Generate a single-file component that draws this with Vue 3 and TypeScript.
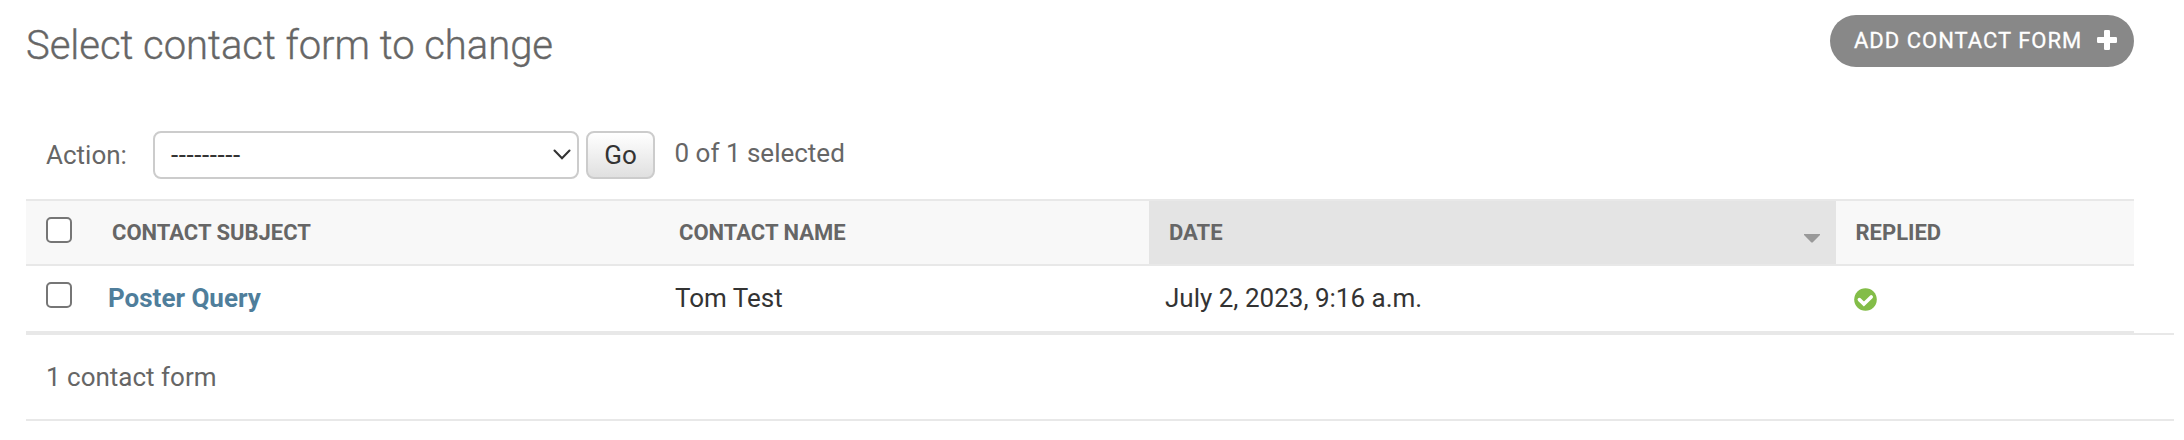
<script setup lang="ts">
import { ref } from 'vue'

interface ContactForm {
  subject: string
  name: string
  date: string
  replied: boolean
}

const rows: ContactForm[] = [
  { subject: 'Poster Query', name: 'Tom Test', date: 'July 2, 2023, 9:16 a.m.', replied: true },
]
const selected = ref<boolean[]>(rows.map(() => false))
</script>

<template>
  <main class="page">
    <header class="top">
      <h1>Select contact form to change</h1>
      <a class="add">
        <span>Add contact form</span>
        <svg class="plus" viewBox="0 0 20 20">
          <rect x="7" y="0" width="6" height="20" rx="1.3" />
          <rect x="0" y="7" width="20" height="6" rx="1.3" />
        </svg>
      </a>
    </header>

    <div class="actions">
      <span class="label">Action:</span>
      <div class="select">
        <span class="value">---------</span>
        <svg class="chevron" viewBox="0 0 18 12">
          <path d="M1.5 1.5 9 9.3 16.5 1.5" />
        </svg>
      </div>
      <button class="go" type="button">Go</button>
      <span class="counter">0 of {{ rows.length }} selected</span>
    </div>

    <div class="table">
      <div class="row head">
        <div class="cell"><input type="checkbox" class="check" /></div>
        <div class="cell">Contact subject</div>
        <div class="cell">Contact name</div>
        <div class="cell sorted">
          <span>Date</span>
          <svg class="arrow" viewBox="0 0 16 9"><path d="M0 0H16V1L8.6 8.6H7.4L0 1Z" /></svg>
        </div>
        <div class="cell">Replied</div>
      </div>
      <div v-for="(row, i) in rows" :key="row.subject" class="row body">
        <div class="cell"><input v-model="selected[i]" type="checkbox" class="check" /></div>
        <div class="cell link">{{ row.subject }}</div>
        <div class="cell">{{ row.name }}</div>
        <div class="cell">{{ row.date }}</div>
        <div class="cell">
          <svg v-if="row.replied" class="yes" viewBox="0 0 23 23">
            <circle cx="11.5" cy="11.5" r="11.3" />
            <path d="M5.4 11.6 9.9 16 17.2 9" />
          </svg>
        </div>
      </div>
    </div>
    <p class="paginator">{{ rows.length }} contact form</p>
  </main>
</template>

<style>
body {
  margin: 0;
  background: #fff;
}
</style>

<style scoped>
.page {
  box-sizing: border-box;
  height: 440px;
  padding: 15px 10px 0 26px;
  font-family: Roboto, "Liberation Sans", sans-serif;
  font-size: 26px;
  color: #666;
}
.top {
  display: flex;
  justify-content: space-between;
  height: 116px;
  margin-right: 40px;
}
h1 {
  margin: 7px 0 0;
  font-size: 40px;
  line-height: 48px;
  font-weight: 300;
  letter-spacing: -0.03px;
  -webkit-text-stroke: 0.35px #666;
}
.add {
  box-sizing: border-box;
  display: flex;
  align-items: center;
  justify-content: space-between;
  width: 304px;
  height: 52px;
  padding: 0 17px 2px 24px;
  border-radius: 26px;
  background: #888;
  color: #fff;
  font-size: 22px;
  letter-spacing: 1px;
  text-transform: uppercase;
  white-space: nowrap;
  -webkit-text-stroke: 0.3px #fff;
}
.plus {
  width: 20px;
  height: 20px;
  fill: #fff;
}
.actions {
  display: flex;
  height: 68px;
  line-height: 48px;
}
.label {
  width: 107px;
  padding-left: 20px;
}
.select {
  box-sizing: border-box;
  display: flex;
  align-items: center;
  justify-content: space-between;
  width: 426px;
  height: 48px;
  padding: 0 6px 0 16px;
  border: 2px solid #ccc;
  border-radius: 8px;
  color: #333;
}
.value {
  letter-spacing: 0.55px;
}
.chevron {
  width: 18px;
  height: 12px;
  fill: none;
  stroke: #333;
  stroke-width: 2.1;
  stroke-linecap: round;
}
.go {
  box-sizing: border-box;
  width: 69px;
  height: 48px;
  margin: 0 0 0 7px;
  padding: 0 0 1px;
  border: 2px solid #ccc;
  border-radius: 8px;
  background: linear-gradient(#fff, #e0e0e0);
  color: #333;
  font: inherit;
  line-height: 30px;
}
.counter {
  margin-left: 19.5px;
  line-height: 45px;
}
.table {
  width: 2108px;
}
.row {
  display: grid;
  grid-template-columns: 66px 567px 490px 687px 298px;
  border-bottom: 2px solid #e8e8e8;
}
.head {
  height: 63px;
  border-top: 2px solid #e8e8e8;
  background: #f8f8f8;
  font-size: 22px;
  font-weight: 700;
  line-height: 63px;
  text-transform: uppercase;
}
.body {
  height: 65px;
  color: #333;
  line-height: 65px;
}
.head .cell {
  padding-left: 20px;
}
.head .cell:last-child {
  padding-left: 19.5px;
}
.body .cell {
  padding-left: 16px;
}
.row .cell:first-child {
  padding: 16px 0 0 20px;
  line-height: 0;
}
.check {
  appearance: none;
  box-sizing: border-box;
  width: 26px;
  height: 26px;
  margin: 0;
  border: 2px solid #767676;
  border-radius: 5px;
  background: #fff;
}
.sorted {
  display: flex;
  justify-content: space-between;
  padding-right: 16px;
  background: #e4e4e4;
}
.arrow {
  width: 16px;
  height: 9px;
  margin-top: 33px;
  fill: #999;
}
.body .link {
  color: #4f7e9b;
  font-weight: 700;
}
.yes {
  display: block;
  width: 23px;
  height: 23px;
  margin: 22px 0 0 1.5px;
  fill: #83bd48;
}
.yes path {
  fill: none;
  stroke: #fff;
  stroke-width: 3.6;
  stroke-linecap: round;
}
.paginator {
  margin: 0;
  padding-left: 20px;
  border: solid #e8e8e8;
  border-width: 2px 0;
  line-height: 84px;
}
</style>
